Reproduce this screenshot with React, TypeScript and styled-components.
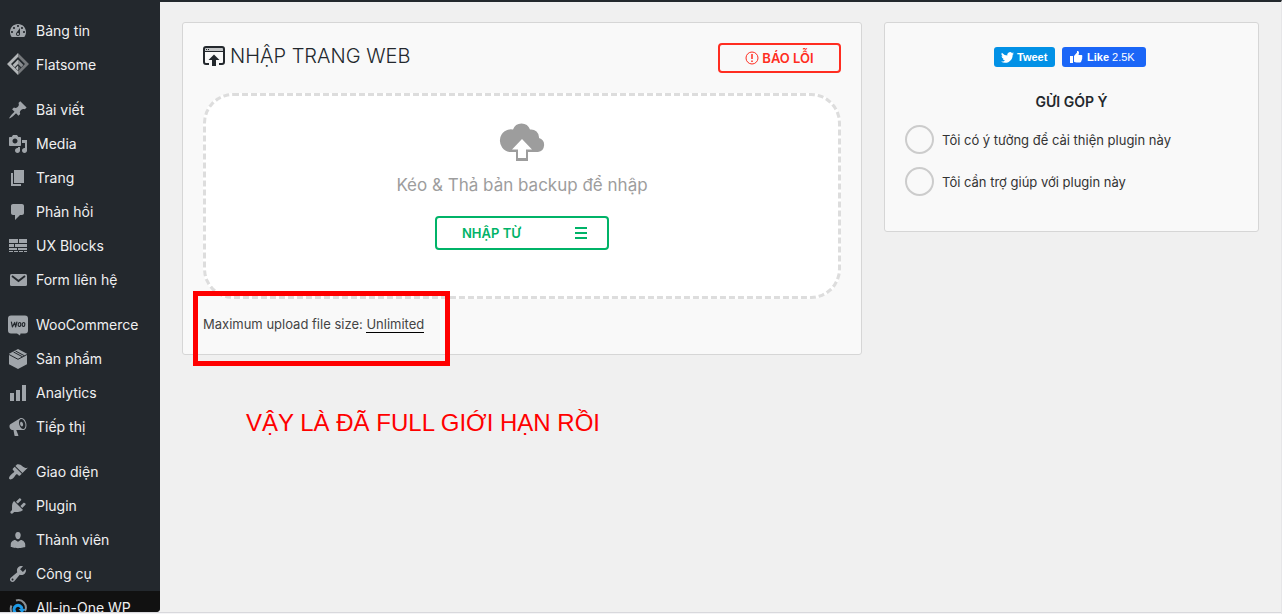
import React from 'react';
import type { ReactNode } from 'react';
import styled, { createGlobalStyle, css } from 'styled-components';

const GlobalStyle = createGlobalStyle`
  *, *::before, *::after { box-sizing: border-box; }
  body {
    margin: 0;
    background: #f0f0f0;
    color: #23282d;
    font-family: Inter, Roboto, "Liberation Sans", sans-serif;
    font-size: 13px;
    line-height: 20px;
  }
`;

/* ---------- page frame ---------- */

const Page = styled.div`
  display: flex;
  flex-direction: column;
  height: 100vh;
  overflow: hidden;
  background: #f0f0f0;
  border-top: 2px solid #23282d;
  border-right: 1px solid #e6e6e8;
`;

const Columns = styled.div`
  display: flex;
  flex: 1;
  min-height: 0;
`;

const BottomEdge = styled.div`
  height: 2px;
  flex: none;
  border-top: 1px solid #d8d8dc;
  background: #f4f4f6;
`;

/* ---------- sidebar ---------- */

const Sidebar = styled.nav`
  width: 160px;
  flex: none;
  overflow: hidden;
  padding-top: 12px;
  background: #23282d;
  border-bottom-right-radius: 4px;
`;

const MenuGroup = styled.ul`
  list-style: none;
  margin: 0 0 11px;
  padding: 0;
`;

const MenuLink = styled.a<{ $active?: boolean }>`
  display: flex;
  align-items: center;
  height: 34px;
  color: #f0f0f1;
  font-size: 14px;
  line-height: 18px;
  text-decoration: none;
  white-space: nowrap;
  ${({ $active }) => $active && css`background: #111;`}
`;

const MenuIcon = styled.svg`
  width: 20px;
  height: 20px;
  flex: none;
  margin: 0 8px;
  fill: #a0a5aa;
`;

/* ---------- content ---------- */

const Content = styled.main`
  display: flex;
  flex: 1;
  min-width: 0;
  align-items: flex-start;
  gap: 22px;
  padding: 20px 22px;
`;

const Card = styled.section`
  padding: 20px;
  background: #f9f9f9;
  border: 1px solid #d6d6d6;
  border-radius: 3px;
`;

const ImportCard = styled(Card)`
  position: relative;
  flex: 1;
  min-width: 0;
`;

const FeedbackCard = styled(Card)`
  width: 375px;
  flex: none;
  padding: 24px 20px 22px;
`;

const CardHeader = styled.header`
  display: flex;
  justify-content: space-between;
  align-items: flex-start;
  height: 50px;
`;

const Title = styled.h1`
  display: flex;
  align-items: center;
  gap: 5px;
  margin: 0;
  font-size: 20px;
  line-height: 26px;
  font-weight: 300;

  svg { display: block; }
`;

const ReportButton = styled.button`
  display: flex;
  align-items: center;
  justify-content: center;
  gap: 3px;
  width: 123px;
  height: 30px;
  padding: 0;
  background: transparent;
  border: 2px solid #ff2d21;
  border-radius: 4px;
  color: #ff2d21;
  font: 600 13px/20px Inter, sans-serif;
`;

const DropZone = styled.div`
  display: flex;
  flex-direction: column;
  align-items: center;
  height: 206px;
  padding-top: 27px;
  background: #fff;
  border: 3px dashed #ddd;
  border-radius: 30px;
`;

const DropHint = styled.p`
  margin: 11px 0 18px;
  color: #9d9d9d;
  font-size: 17px;
  line-height: 26px;
`;

const ImportButton = styled.button`
  display: flex;
  align-items: center;
  justify-content: space-between;
  width: 174px;
  height: 34px;
  padding: 0 20px 0 25px;
  background: transparent;
  border: 2px solid #00b368;
  border-radius: 4px;
  color: #00b368;
  font: 600 13px/20px Inter, sans-serif;
`;

const SizeNote = styled.p`
  margin: 15px 0 0;
  color: #444;
`;

const SizeLink = styled.a`
  display: inline-block;
  line-height: 16px;
  color: #444;
  text-decoration: none;
  border-bottom: 1px solid #000;
`;

const Highlight = styled.div`
  position: absolute;
  left: 10px;
  top: 268px;
  width: 257px;
  height: 75px;
  border: 5px solid #f00;
  pointer-events: none;
`;

const Annotation = styled.div`
  position: absolute;
  left: 63px;
  top: 386px;
  color: #f00;
  font: 24px/28px "Liberation Sans", Arial, sans-serif;
  white-space: nowrap;
`;

/* ---------- feedback card ---------- */

const SocialRow = styled.div`
  display: flex;
  justify-content: center;
  gap: 7px;
  padding-right: 3px;
`;

const SocialButton = styled.a<{ $color: string; $width: number }>`
  display: flex;
  align-items: center;
  gap: 3px;
  width: ${({ $width }) => $width}px;
  height: 20px;
  padding-left: 7px;
  background: ${({ $color }) => $color};
  border-radius: 3px;
  color: #fff;
  font: 700 11px/18px "Liberation Sans", Arial, sans-serif;
  text-decoration: none;

  svg { fill: #fff; }
`;

const LikeLabel = styled.span`
  padding-left: 1px;
`;

const LikeCount = styled.span`
  font-weight: 400;
`;

const FeedbackForm = styled.fieldset`
  margin: 0;
  padding: 0;
  border: 0;
`;

const FeedbackTitle = styled.legend`
  width: 100%;
  padding: 25px 0 13px;
  font-size: 14px;
  line-height: 20px;
  font-weight: 600;
  text-align: center;
`;

const Choice = styled.label`
  display: flex;
  align-items: center;
  gap: 8px;
  height: 29px;
  margin-bottom: 13px;
  color: #333;
`;

const Radio = styled.input`
  appearance: none;
  width: 29px;
  height: 29px;
  flex: none;
  margin: 0;
  background: #f9f9f9;
  border: 2px solid #ccc;
  border-radius: 50%;

  &:checked { background: #ccc; }
`;

/* ---------- menu icons, 20 by 20 ---------- */

const icons: Record<string, ReactNode> = {
  dashboard: <path d="M3.76 16h12.48c1.1-1.37 1.76-3.11 1.76-5 0-4.42-3.58-8-8-8s-8 3.58-8 8c0 1.89.66 3.63 1.76 5zM10 4c.55 0 1 .45 1 1s-.45 1-1 1-1-.45-1-1 .45-1 1-1zM6 6c.55 0 1 .45 1 1s-.45 1-1 1-1-.45-1-1 .45-1 1-1zm8 0c.55 0 1 .45 1 1s-.45 1-1 1-1-.45-1-1 .45-1 1-1zm-5.37 5.55L12 7v6c0 1.1-.9 2-2 2s-2-.9-2-2c0-.57.24-1.08.63-1.45zM4 10c.55 0 1 .45 1 1s-.45 1-1 1-1-.45-1-1 .45-1 1-1zm12 0c.55 0 1 .45 1 1s-.45 1-1 1-1-.45-1-1 .45-1 1-1zm-5 3c0-.55-.45-1-1-1s-1 .45-1 1 .45 1 1 1 1-.45 1-1z" />,
  flatsome: (
    <>
      <path d="M10-2L-1 9l11 11v-4L3 9l7-7z" fill="#b3b6b8" />
      <path d="M10-2l11 11-11 11v-4l7-7-7-7z" fill="#76797c" />
      <path d="M10 4.500L4.600 10l2.200 2.200L10 9z" fill="#b3b6b8" />
      <path d="M10 4.500l5.400 5.500-2.200 2.200L10 9z" fill="#8a8d90" />
      <path d="M7.500 13l2.500 2.500V10.500z" fill="#b3b6b8" />
      <path d="M12.500 13L10 15.500V10.500z" fill="#54585c" />
    </>
  ),
  post: <path d="M10.44 3.02l1.82-1.82 6.36 6.35-1.83 1.82c-1.05-.68-2.48-.57-3.41.36l-.75.75c-.92.93-1.04 2.35-.35 3.41l-1.83 1.82-2.41-2.41-2.8 2.79c-.42.42-3.38 2.71-3.8 2.29s1.86-3.39 2.28-3.81l2.79-2.79L4.1 9.36l1.83-1.82c1.05.69 2.48.57 3.4-.36l.75-.75c.93-.92 1.05-2.35.36-3.41z" />,
  media: <path d="M13 11V4c0-.55-.45-1-1-1h-1.67L9 1H5L3.67 3H2c-.55 0-1 .45-1 1v7c0 .55.45 1 1 1h10c.55 0 1-.45 1-1zM7 4.5c1.38 0 2.5 1.12 2.5 2.5S8.38 9.5 7 9.5 4.5 8.38 4.5 7 5.62 4.5 7 4.5zM14 6h5v10.5c0 1.38-1.12 2.5-2.5 2.5S14 17.88 14 16.5s1.12-2.5 2.5-2.5c.17 0 .34.02.5.05V9h-3V6zm-4 8.050V13h2v3.500c0 1.380-1.120 2.500-2.500 2.500S7 17.880 7 16.500 8.120 14 9.500 14c.170 0 .340.020.500.050z" />,
  page: <path d="M6 15V2h10v13H6zm-1 1h8v2H3V5h2v11z" />,
  comments: <path d="M5 2h9c1.1 0 2 .9 2 2v7c0 1.100-.900 2-2 2h-2l-5 5v-5H5c-1.100 0-2-.900-2-2V4c0-1.100.900-2 2-2z" />,
  blocks: (
    <path d="M1 3h9v4H1zM11 3h8v4h-8zM1 8h5v3H1zM7 8h12v3H7zM1 12h8v2H1zM10 12h9v2h-9zM1 15h4v1H1zM6 15h4v1H6zM11 15h4v1h-4zM16 15h3v1h-3z" />
  ),
  email: (
    <>
      <rect x="2" y="4" width="17" height="12" rx="1.500" />
      <path d="M4 6l6.500 5L17 6" fill="none" stroke="#23282d" strokeWidth="1.800" />
    </>
  ),
  woo: (
    <>
      <path d="M3 .5h14a3 3 0 0 1 3 3v12a3 3 0 0 1-3 3h-4.500l-.500 2-3-2H3a3 3 0 0 1-3-3v-12a3 3 0 0 1 3-3z" />
      <g fill="none" stroke="#23282d" strokeWidth="1.200" strokeLinejoin="round" strokeLinecap="round">
        <path d="M3.400 7l1 5L6.700 7.500l.900 4.500L8.900 7" />
        <ellipse cx="11.500" cy="9.500" rx="1.300" ry="2" transform="rotate(12 11.500 9.500)" />
        <ellipse cx="15.500" cy="9.500" rx="1.300" ry="2" transform="rotate(12 15.500 9.500)" />
      </g>
    </>
  ),
  product: (
    <>
      <path d="M10 0l9 4.800v10.400L10 20l-9-4.800V4.800z" />
      <path d="M1 5.500l9 4.800 9-4.800M5.500 3l9 4.800M7.500 2l9 4.800" fill="none" stroke="#23282d" strokeWidth="1" />
    </>
  ),
  chart: <path d="M18 18V2h-4v16h4zm-6 0V7H8v11h4zm-6 0v-8H2v8h4z" />,
  megaphone: <path d="M18.15 5.94c.46 1.62.38 3.22-.02 4.48-.42 1.28-1.26 2.18-2.3 2.48-.16.06-.26.06-.4.06-.06.02-.12.02-.18.02-.06.02-.14.02-.22.02h-6.800l2.220 5.500c.020.140-.060.260-.140.340-.080.100-.240.160-.340.160H6.950c-.100 0-.260-.060-.340-.160-.080-.080-.160-.200-.140-.340l-1-5.500H4.250l-.020-.020c-.500.060-1.080-.180-1.540-.620s-.880-1.080-1.060-1.880c-.240-.800-.200-1.560-.020-2.200.180-.620.580-1.080 1.060-1.300l.020-.020 9-5.400c.100-.060.180-.100.240-.160.060-.040.140-.080.240-.120.160-.080.280-.120.500-.180 1.040-.300 2.240.100 3.220.980s1.840 2.240 2.260 3.860zm-2.580 5.980h-.020c.400-.100.740-.340 1.040-.700.580-.700.860-1.760.860-3.040 0-.640-.100-1.300-.280-1.980-.340-1.360-1.020-2.500-1.780-3.240s-1.680-1.100-2.460-.880c-.820.220-1.400.960-1.700 2-.320 1.040-.280 2.360.060 3.720.380 1.360 1 2.500 1.800 3.240.780.740 1.620 1.100 2.480.880zm-2.540-7.080c.220-.040.420-.020.620.040.380.160.760.480 1.020 1s.420 1.200.420 1.780c0 .300-.040.560-.120.800-.180.480-.440.840-.860.940-.340.100-.800-.060-1.140-.400s-.640-.860-.780-1.500c-.180-.620-.120-1.240.020-1.720s.480-.840.820-.940z" />,
  appearance: <path d="M14.48 11.06L7.41 3.99l1.5-1.5c.5-.56 2.3-.47 3.51.32 1.21.8 1.43 1.28 2.91 2.1 1.18.64 2.45 1.26 4.45.85zm-.71.71L6.7 4.7 4.93 6.47c-.39.39-.39 1.02 0 1.41l1.06 1.06c.39.39.39 1.03 0 1.42-.6.6-1.43 1.11-2.21 1.69-.35.26-.7.53-1.01.84C1.43 14.23.4 16.08 1.4 17.07c.99 1 2.84-.03 4.18-1.36.31-.31.58-.66.85-1.02.57-.78 1.08-1.61 1.69-2.21.39-.39 1.02-.39 1.41 0l1.06 1.06c.39.39 1.02.39 1.41 0z" />,
  plugins: <path d="M13.11 4.36L9.87 7.6 8 5.73l3.24-3.24c.35-.34 1.05-.2 1.56.32.52.51.66 1.21.31 1.55zm-8 1.77l.91-1.12 9.01 9.01-1.19.84c-.71.71-2.63 1.16-3.82 1.16H6.14L4.9 17.26c-.59.59-1.54.59-2.12 0-.59-.58-.59-1.53 0-2.12l1.24-1.24v-3.88c0-1.13.4-3.19 1.09-3.89zm7.26 3.97l3.24-3.24c.34-.35 1.04-.21 1.55.31.52.51.66 1.21.31 1.55l-3.24 3.25z" />,
  users: <path d="M10 9.25c-2.27 0-2.73-3.44-2.73-3.44C7 4.02 7.82 2 9.97 2c2.16 0 2.98 2.02 2.71 3.81 0 0-.41 3.44-2.68 3.44zm0 2.57L12.72 10c2.39 0 4.52 2.33 4.52 4.53v2.49s-3.65 1.13-7.24 1.13c-3.65 0-7.24-1.13-7.24-1.13v-2.49c0-2.25 1.94-4.48 4.47-4.48z" />,
  tools: <path d="M16.68 9.77c-1.34 1.34-3.3 1.67-4.95.99l-5.41 6.52c-.99.99-2.59.99-3.58 0s-.99-2.59 0-3.57l6.52-5.42c-.68-1.65-.35-3.61.99-4.95 1.28-1.28 3.12-1.62 4.72-1.06l-2.89 2.89 2.82 2.82 2.86-2.87c.53 1.58.18 3.39-1.08 4.65zM3.81 16.21c.4.39 1.04.39 1.43 0 .4-.4.4-1.04 0-1.43-.39-.4-1.03-.4-1.43 0-.39.39-.39 1.03 0 1.43z" />,
  migration: (
    <g fill="none">
      <path d="M8 2.500a7.500 7.500 0 0 1 9 10.500M3.500 7.500A7.500 7.500 0 0 0 6 17" stroke="#8b9094" strokeWidth="2" />
      <path d="M7.500 14.500a4 4 0 1 1 6.500-3.500" stroke="#1d9be8" strokeWidth="3" />
      <path d="M10.500 11h7l-3.500 4z" fill="#1d9be8" />
    </g>
  ),
};

type MenuEntry = { icon: string; label: string; active?: boolean };

const menu: MenuEntry[][] = [
  [
    { icon: 'dashboard', label: 'Bảng tin' },
    { icon: 'flatsome', label: 'Flatsome' },
  ],
  [
    { icon: 'post', label: 'Bài viết' },
    { icon: 'media', label: 'Media' },
    { icon: 'page', label: 'Trang' },
    { icon: 'comments', label: 'Phản hồi' },
    { icon: 'blocks', label: 'UX Blocks' },
    { icon: 'email', label: 'Form liên hệ' },
  ],
  [
    { icon: 'woo', label: 'WooCommerce' },
    { icon: 'product', label: 'Sản phẩm' },
    { icon: 'chart', label: 'Analytics' },
    { icon: 'megaphone', label: 'Tiếp thị' },
  ],
  [
    { icon: 'appearance', label: 'Giao diện' },
    { icon: 'plugins', label: 'Plugin' },
    { icon: 'users', label: 'Thành viên' },
    { icon: 'tools', label: 'Công cụ' },
    { icon: 'migration', label: 'All-in-One WP', active: true },
  ],
];

const choices = [
  { value: 'idea', label: 'Tôi có ý tưởng để cải thiện plugin này' },
  { value: 'help', label: 'Tôi cần trợ giúp với plugin này' },
];

function AdminMenu() {
  return (
    <Sidebar>
      {menu.map((group, index) => (
        <MenuGroup key={index}>
          {group.map(({ icon, label, active }) => (
            <li key={label}>
              <MenuLink href="#" $active={active}>
                <MenuIcon viewBox="0 0 20 20" overflow="visible" aria-hidden="true">
                  {icons[icon]}
                </MenuIcon>
                {label}
              </MenuLink>
            </li>
          ))}
        </MenuGroup>
      ))}
    </Sidebar>
  );
}

function ImportPanel() {
  return (
    <ImportCard>
      <CardHeader>
        <Title>
          <svg width="22" height="21" viewBox="0 0 22 21" fill="none" aria-hidden="true">
            <path d="M2 2h18v3H2z" fill="#c4c6c8" />
            <path d="M6 18H3a2 2 0 0 1-2-2V3a2 2 0 0 1 2-2h16a2 2 0 0 1 2 2v13a2 2 0 0 1-2 2h-3" stroke="#23282d" strokeWidth="2" />
            <path d="M1 5.500h20" stroke="#23282d" />
            <path d="M3 3.500h1M5 3.500h1" stroke="#23282d" />
            <path d="M11 8.500l5.500 5.500H13v6H9v-6H5.500z" fill="#23282d" />
          </svg>
          NHẬP TRANG WEB
        </Title>
        <ReportButton type="button">
          <svg width="14" height="14" viewBox="0 0 14 14" fill="none" stroke="currentColor" aria-hidden="true">
            <circle cx="7" cy="7" r="6" />
            <path d="M7 3v5M7 9.500v1.500" strokeWidth="1.500" />
          </svg>
          BÁO LỖI
        </ReportButton>
      </CardHeader>
      <DropZone>
        <svg width="46" height="38" viewBox="0 0 46 38" aria-hidden="true">
          <path
            d="M10.500 29A11 11.400 0 1 1 14 6.500 9 9 0 0 1 31 6.500a8 8 0 0 1 9 8.500 7.200 7.200 0 0 1-1 14H29v9H17v-9z"
            fill="#9d9d9d"
          />
          <path d="M23 16l10 10.500h-6V35h-8v-8.500h-6z" fill="#fff" />
        </svg>
        <DropHint>Kéo &amp; Thả bản backup để nhập</DropHint>
        <ImportButton type="button">
          NHẬP TỪ
          <svg width="12" height="12" viewBox="0 0 12 12" fill="currentColor" aria-hidden="true">
            <path d="M0 0h12v2H0zM0 5h12v2H0zM0 10h12v2H0z" />
          </svg>
        </ImportButton>
      </DropZone>
      <SizeNote>
        Maximum upload file size: <SizeLink href="#">Unlimited</SizeLink>
      </SizeNote>
      <Highlight />
      <Annotation>VẬY LÀ ĐÃ FULL GIỚI HẠN RỒI</Annotation>
    </ImportCard>
  );
}

function FeedbackPanel() {
  return (
    <FeedbackCard>
      <SocialRow>
        <SocialButton href="#" $color="#0291e6" $width={61}>
          <svg width="13" height="11" viewBox="0 0 24 20" aria-hidden="true">
            <path d="M24 2.400a9.800 9.800 0 0 1-2.800.8A4.900 4.900 0 0 0 23.300.5a9.900 9.900 0 0 1-3.100 1.200 4.900 4.900 0 0 0-8.400 4.500A14 14 0 0 1 1.700 1a4.900 4.900 0 0 0 1.500 6.600A4.900 4.900 0 0 1 1 7v.1a4.900 4.900 0 0 0 3.900 4.800 5 5 0 0 1-2.200.1 4.900 4.900 0 0 0 4.600 3.400A9.900 9.900 0 0 1 0 17.500 14 14 0 0 0 7.500 19.700c9.100 0 14-7.500 14-14v-.6A10 10 0 0 0 24 2.400z" />
          </svg>
          Tweet
        </SocialButton>
        <SocialButton href="#" $color="#1b66f7" $width={84}>
          <svg width="14" height="13" viewBox="0 0 14 13" aria-hidden="true">
            <path d="M1 5h3v7H1zM5 5l3-3.500V0c.9-.2 2 .2 2 1.500 0 1-.2 1.800-.5 2.500H12c1.500 0 1.700 1.500.9 2 .7.600.5 1.500-.1 1.900.4.700.1 1.500-.5 1.800.1.800-.4 1.600-1.300 1.800H7.500C6.500 11.500 5.800 11 5 10.800z" />
          </svg>
          <LikeLabel>Like</LikeLabel>
          <LikeCount>2.5K</LikeCount>
        </SocialButton>
      </SocialRow>
      <FeedbackForm>
        <FeedbackTitle>GỬI GÓP Ý</FeedbackTitle>
        {choices.map(({ value, label }) => (
          <Choice key={value}>
            <Radio type="radio" name="feedback" value={value} />
            {label}
          </Choice>
        ))}
      </FeedbackForm>
    </FeedbackCard>
  );
}

export default function App() {
  return (
    <>
      <GlobalStyle />
      <Page>
        <Columns>
          <AdminMenu />
          <Content>
            <ImportPanel />
            <FeedbackPanel />
          </Content>
        </Columns>
        <BottomEdge />
      </Page>
    </>
  );
}
